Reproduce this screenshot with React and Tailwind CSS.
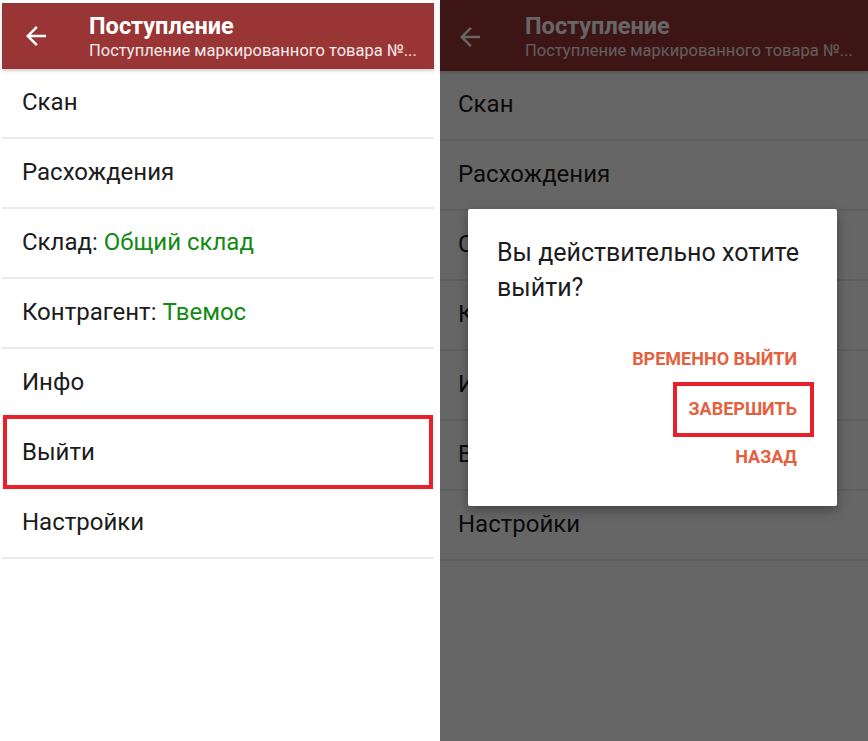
const rows = [
  { label: 'Скан' },
  { label: 'Расхождения' },
  { label: 'Склад:', value: 'Общий склад' },
  { label: 'Контрагент:', value: 'Твемос' },
  { label: 'Инфо' },
  { label: 'Выйти', marked: true },
  { label: 'Настройки' },
];

function BackArrow() {
  return (
    <svg width="30" height="30" viewBox="0 0 24 24" fill="currentColor">
      <path d="M20 11H7.83l5.59-5.59L12 4l-8 8 8 8 1.41-1.41L7.83 13H20v-2z" />
    </svg>
  );
}

function Screen({ dimmed }) {
  return (
    <div className="flex flex-col">
      {/* header */}
      <div
        className={`flex items-center bg-[#9a3535] text-white shadow-[0_2px_3px_rgba(0,0,0,0.18)] ${dimmed ? 'h-[71px]' : 'h-[66px]'}`}
      >
        <div className={`flex justify-center ${dimmed ? 'w-[60px] pt-[2px]' : 'w-[68px]'}`}>
          <BackArrow />
        </div>
        <div className={`flex flex-col min-w-0 ${dimmed ? 'ml-[25px] pt-[2px]' : 'ml-[19px]'}`}>
          <div className="text-[23.5px] leading-[28px] font-bold">Поступление</div>
          <div className="text-[16.5px] leading-[21px] text-white/90 whitespace-nowrap">
            Поступление маркированного товара №...
          </div>
        </div>
      </div>

      {/* menu */}
      {rows.map((r) => (
        <div
          key={r.label}
          className={`relative flex items-center h-[70px] pb-[3px] border-b-2 border-[#ebebeb] text-[24px] text-[#1c1c1c] ${dimmed ? 'pl-[18px]' : 'pl-[20px]'}`}
        >
          <span>{r.label}</span>
          {r.value && <span className="ml-[6px] text-[#138a13]">{r.value}</span>}
          {r.marked && !dimmed && (
            <div className="absolute left-[1px] right-[1px] top-[-4px] bottom-[-2px] border-4 border-[#e8202a]" />
          )}
        </div>
      ))}
    </div>
  );
}

export default function App() {
  return (
    <div className="flex w-[868px] h-[741px] bg-white overflow-hidden font-['Roboto','Liberation_Sans',sans-serif]">
      {/* left phone screen */}
      <div className="w-[434px] pl-[2px] pt-[3px]">
        <Screen />
      </div>

      {/* right phone screen with dialog */}
      <div className="relative ml-[6px] w-[428px] h-full bg-white">
        <Screen dimmed />
        <div className="absolute inset-0 bg-black/60" />

        <div className="absolute left-[28px] top-[209px] w-[369px] h-[297px] bg-white rounded-[2px] shadow-[0_4px_12px_rgba(0,0,0,0.35)] flex flex-col">
          <p className="px-[29px] pt-[26px] text-[25px] leading-[35px] text-[#1c1c1c]">
            Вы действительно хотите выйти?
          </p>
          <div className="flex flex-col items-end pr-[40px] mt-[41px] text-[18px] font-bold text-[#e5603e]">
            <div className="h-[24px] flex items-center">ВРЕМЕННО ВЫЙТИ</div>
            <div className="relative h-[24px] mt-[26px] flex items-center">
              ЗАВЕРШИТЬ
              <div className="absolute left-[-15px] right-[-17px] top-[-14px] bottom-[-17px] border-4 border-[#e8202a]" />
            </div>
            <div className="h-[24px] mt-[24px] flex items-center">НАЗАД</div>
          </div>
        </div>
      </div>
    </div>
  );
}
